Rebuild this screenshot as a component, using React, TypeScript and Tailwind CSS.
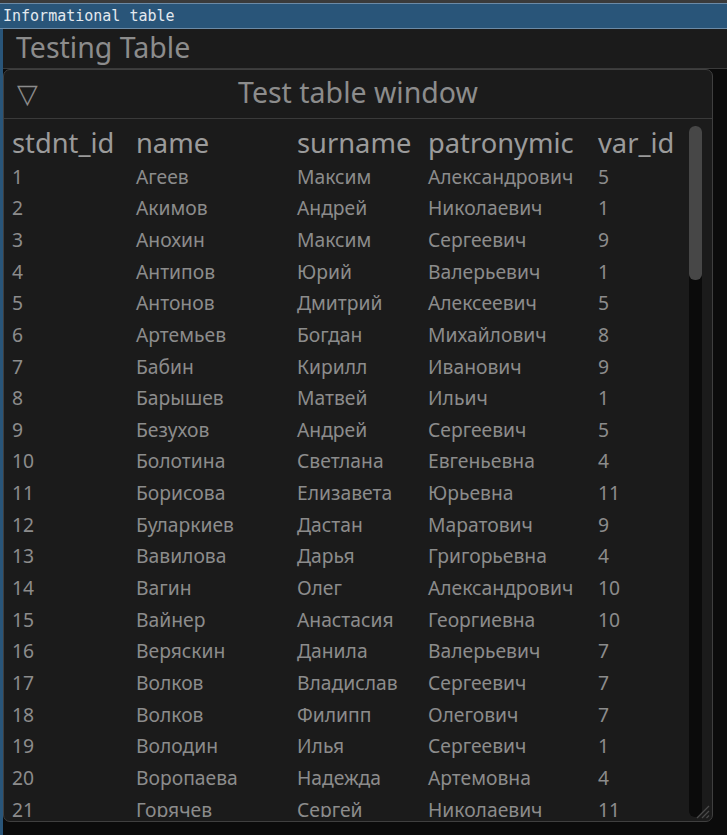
import React from 'react';

type Row = [number, string, string, string, number];

const rows: Row[] = [
  [1, 'Агеев', 'Максим', 'Александрович', 5],
  [2, 'Акимов', 'Андрей', 'Николаевич', 1],
  [3, 'Анохин', 'Максим', 'Сергеевич', 9],
  [4, 'Антипов', 'Юрий', 'Валерьевич', 1],
  [5, 'Антонов', 'Дмитрий', 'Алексеевич', 5],
  [6, 'Артемьев', 'Богдан', 'Михайлович', 8],
  [7, 'Бабин', 'Кирилл', 'Иванович', 9],
  [8, 'Барышев', 'Матвей', 'Ильич', 1],
  [9, 'Безухов', 'Андрей', 'Сергеевич', 5],
  [10, 'Болотина', 'Светлана', 'Евгеньевна', 4],
  [11, 'Борисова', 'Елизавета', 'Юрьевна', 11],
  [12, 'Буларкиев', 'Дастан', 'Маратович', 9],
  [13, 'Вавилова', 'Дарья', 'Григорьевна', 4],
  [14, 'Вагин', 'Олег', 'Александрович', 10],
  [15, 'Вайнер', 'Анастасия', 'Георгиевна', 10],
  [16, 'Веряскин', 'Данила', 'Валерьевич', 7],
  [17, 'Волков', 'Владислав', 'Сергеевич', 7],
  [18, 'Волков', 'Филипп', 'Олегович', 7],
  [19, 'Володин', 'Илья', 'Сергеевич', 1],
  [20, 'Воропаева', 'Надежда', 'Артемовна', 4],
  [21, 'Горячев', 'Сергей', 'Николаевич', 11],
];

const headers = ['stdnt_id', 'name', 'surname', 'patronymic', 'var_id'];

// column widths in px, last one takes the rest
const colClass = ['w-[124px]', 'w-[161px]', 'w-[131px]', 'w-[170px]', 'flex-1'];

const ResizeGrip: React.FC = () => (
  <svg width="14" height="14" viewBox="0 0 14 14" className="absolute right-[2px] bottom-[2px] pointer-events-none">
    <line x1="13" y1="1" x2="1" y2="13" stroke="#4a4a4a" strokeWidth="1.3" />
    <line x1="13" y1="6" x2="6" y2="13" stroke="#4a4a4a" strokeWidth="1.3" />
    <line x1="13" y1="10.5" x2="10.5" y2="13" stroke="#4a4a4a" strokeWidth="1.3" />
  </svg>
);

const App: React.FC = () => {
  return (
    <div
      className="w-[727px] h-[835px] bg-[#0b0b0b] flex flex-col overflow-hidden"
      style={{ fontFamily: '"Noto Sans", "Open Sans", sans-serif' }}
    >
      {/* os title bar */}
      <div className="h-[3px] bg-[#3a3a3a]" />
      <div className="h-[26px] bg-[#295579] border-y border-[#6b8aa6] flex items-center px-[3px]">
        <span className="text-[15px] leading-none text-[#e3e9ef]" style={{ fontFamily: '"DejaVu Sans Mono", monospace' }}>
          Informational table
        </span>
      </div>

      <div className="flex flex-1 min-h-0">
        {/* left window border */}
        <div className="w-[3px] bg-[#295579]" />

        <div className="flex-1 flex flex-col min-w-0">
          {/* top panel */}
          <div className="h-[40px] bg-[#1b1b1b] border-b border-[#3a3a3a] flex items-center pl-[13px]">
            <span className="text-[28.5px] leading-[1.2] text-[#8c8c8c] -mt-[2px]">Testing Table</span>
          </div>

          {/* floating window */}
          <div className="relative h-[753px] mr-[14px] bg-[#1b1b1b] border border-[#3f3f3f] rounded-[7px] flex flex-col overflow-hidden">
            <div className="h-[49px] border-b border-[#3a3a3a] relative flex items-center justify-center">
              <span className="absolute left-[13px] top-[9px] text-[27px] leading-none text-[#8c8c8c]">▽</span>
              <span className="text-[28.5px] leading-[1.2] text-[#8c8c8c] -mt-[3px]">Test table window</span>
            </div>

            <div className="flex flex-1 min-h-0 pt-[5px] pb-[4px]">
              <div className="flex-1 min-w-0 overflow-hidden pl-[8px]">
                <div className="flex h-[37px] items-center text-[27.3px] leading-[1.36] text-[#9b9b9b]">
                  {headers.map((h, i) => (
                    <div key={h} className={`${colClass[i]} whitespace-nowrap`}>
                      {h}
                    </div>
                  ))}
                </div>
                {rows.map((r) => (
                  <div key={r[0]} className="flex h-[31.65px] items-center text-[19.3px] leading-[1.36] text-[#8c8c8c]">
                    {r.map((c, i) => (
                      <div key={i} className={`${colClass[i]} whitespace-nowrap`}>
                        {c}
                      </div>
                    ))}
                  </div>
                ))}
              </div>

              {/* scroll bar */}
              <div className="w-[13px] mr-[10px] mt-[2px] bg-[#0b0b0b] rounded-[6px] flex flex-col">
                <div className="h-[154px] bg-[#474747] rounded-[6px]" />
              </div>
            </div>

            <ResizeGrip />
          </div>
        </div>
      </div>
    </div>
  );
};

export default App;
